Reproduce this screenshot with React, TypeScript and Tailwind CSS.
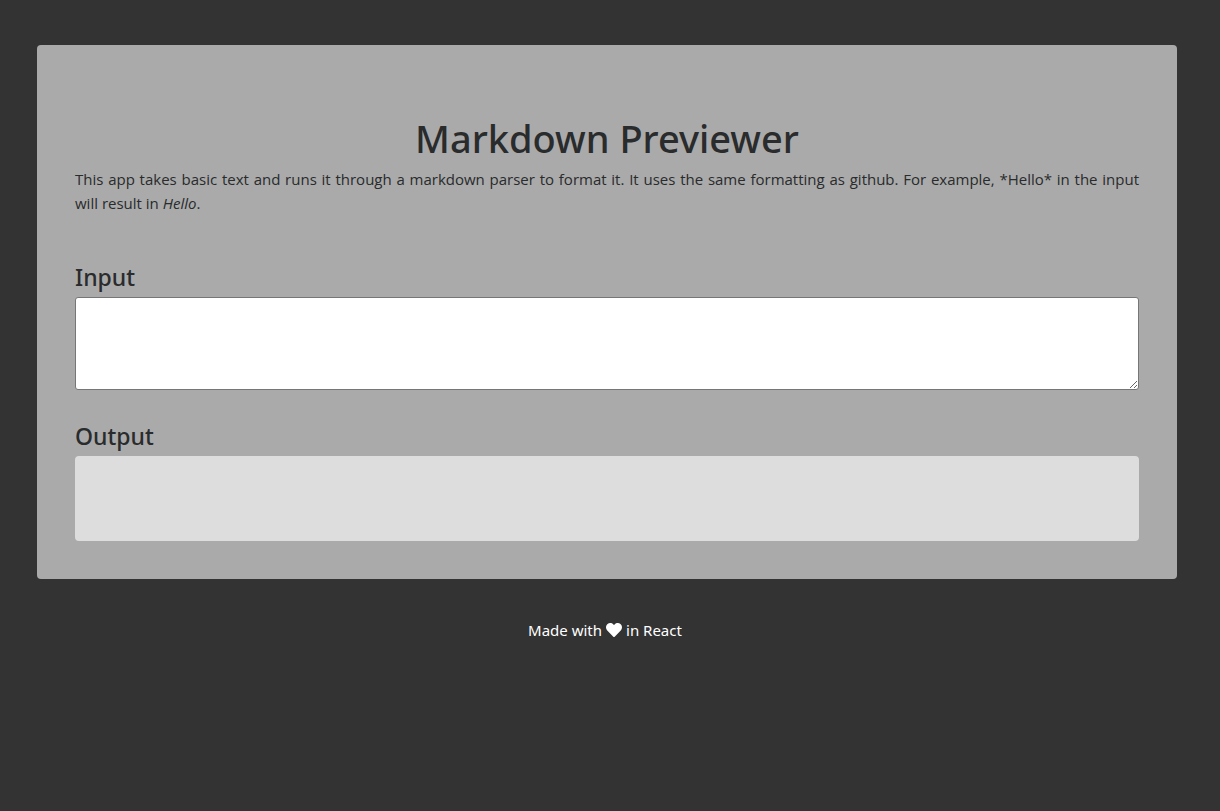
import { useState } from "react";
import { FaHeart } from "react-icons/fa";

export default function App() {
  const [text, setText] = useState("");
  return (
    <div className="min-h-screen bg-[#333333] pt-[45px] pr-[43px] pb-10 pl-[37px] font-['Noto_Sans',sans-serif] text-base text-[#292b2c]">
      <main className="rounded bg-[#aaaaaa] px-[38px] pt-[69px] pb-[38px]">
        <h1 className="text-center text-[38px] leading-[48px] font-medium">Markdown Previewer</h1>
        <p className="mt-[5px] text-justify font-['Open_Sans',sans-serif] text-[15px] leading-6">
          This app takes basic text and runs it through a markdown parser to format it. It uses the same formatting as
          github. For example, *Hello* in the input will result in <em>Hello</em>.
        </p>
        <label htmlFor="input" className="mt-12 block text-[23px] leading-7 font-medium">
          Input
        </label>
        <textarea
          id="input"
          value={text}
          onChange={(event) => setText(event.target.value)}
          className="mt-1.5 block h-[93px] w-full resize rounded-[3px] border border-[#767676] bg-white p-1 outline-none"
        />
        <h2 className="mt-8 text-[23px] leading-7 font-medium">Output</h2>
        <output htmlFor="input" className="mt-1.5 block min-h-[85px] rounded bg-[#dddddd] whitespace-pre-wrap">
          {text}
        </output>
      </main>
      <footer className="mt-[39px] flex items-center justify-center gap-1 pr-1 text-[15px] leading-6 text-white">
        <span>Made with</span>
        <FaHeart className="size-4" />
        <span>in React</span>
      </footer>
    </div>
  );
}
